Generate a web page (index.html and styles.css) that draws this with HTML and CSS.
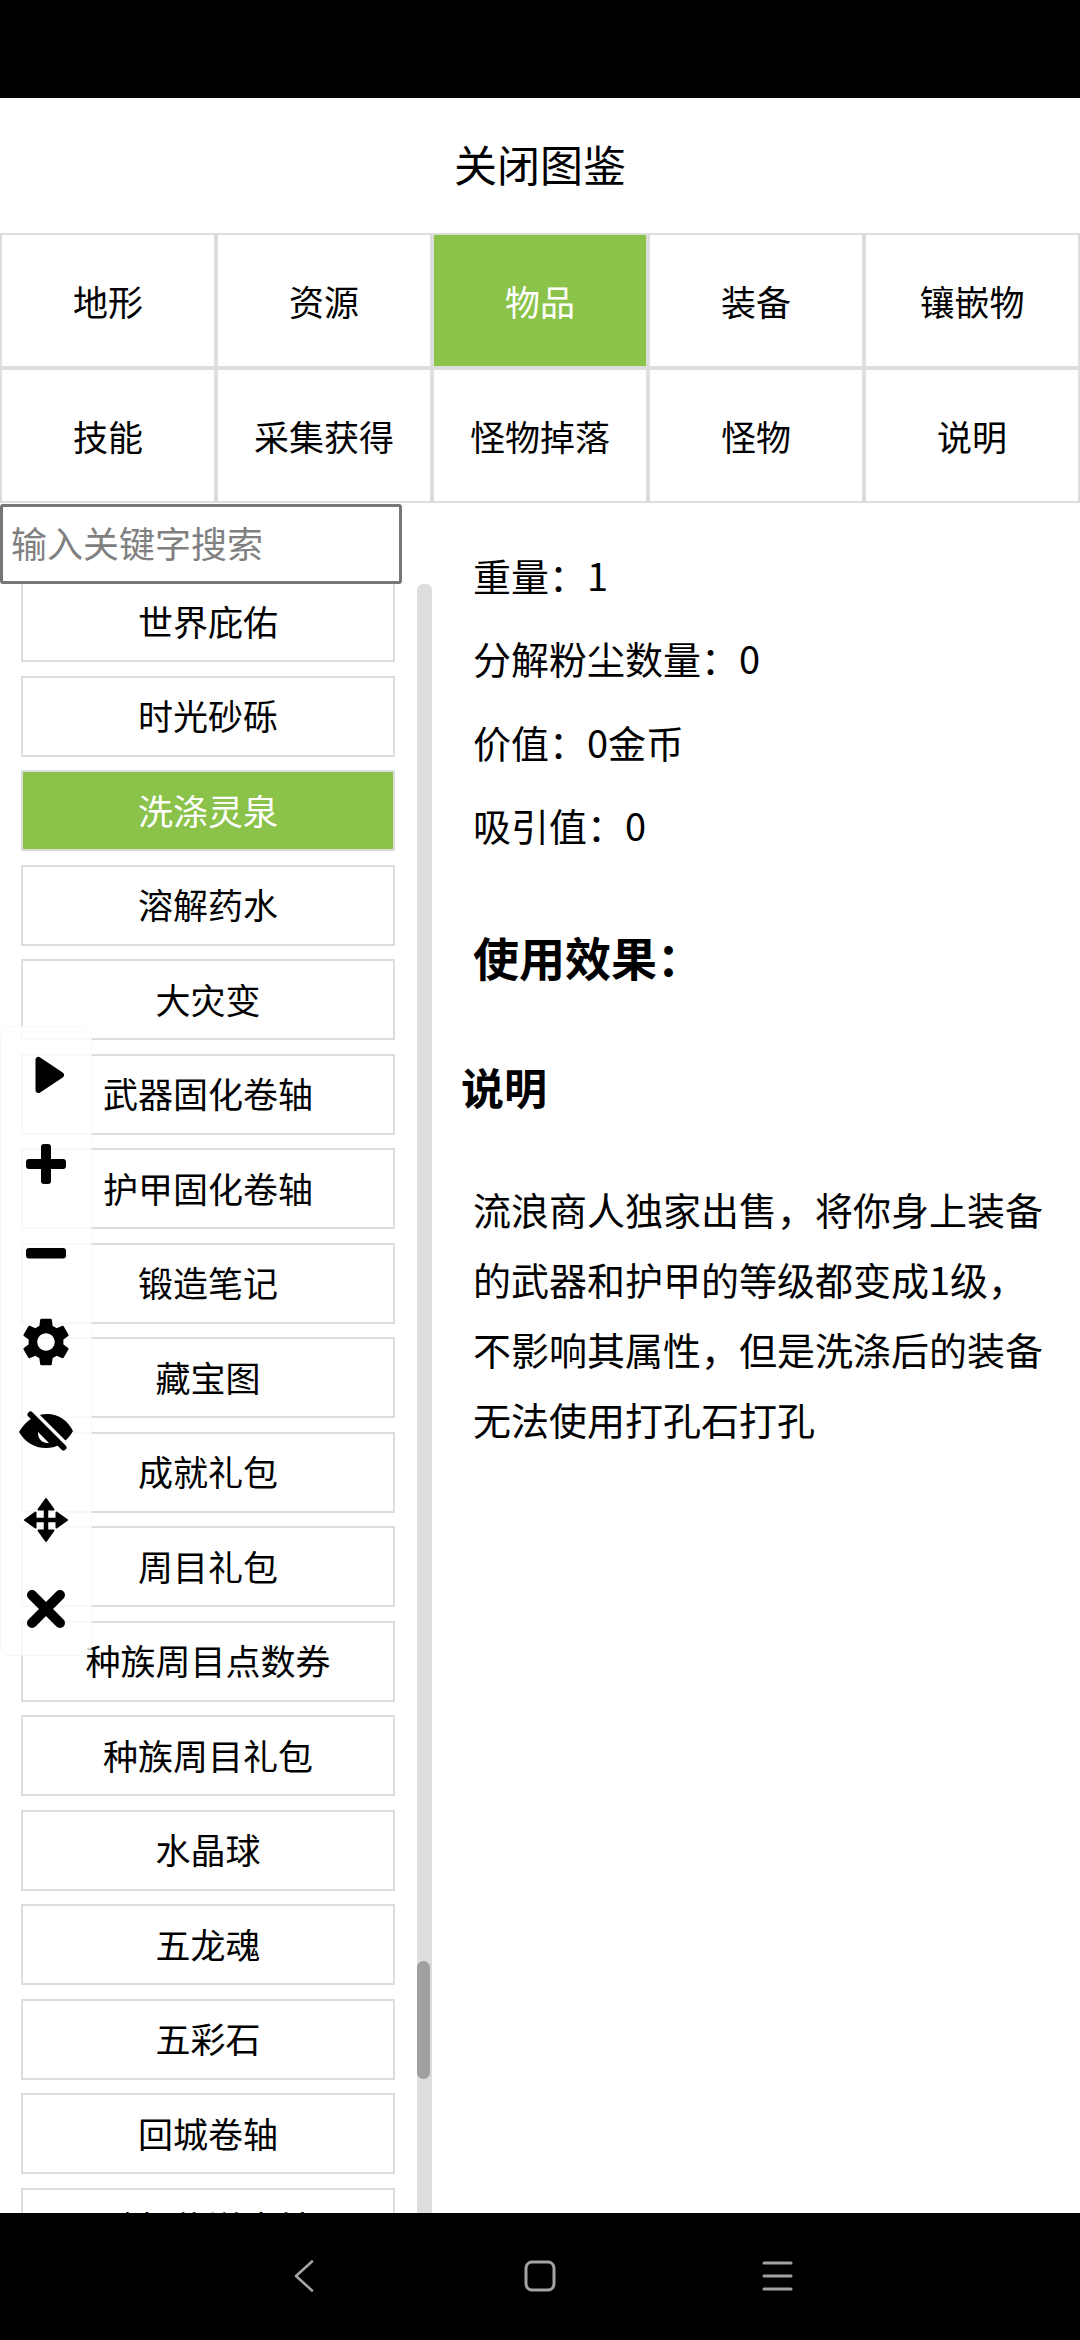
FILE: index.html
```html
<!DOCTYPE html>
<html lang="zh-CN">
<head>
    <meta charset="UTF-8">
    <meta name="viewport" content="width=device-width, initial-scale=1.0">
    <title>图鉴</title>
    <link rel="stylesheet" href="styles.css">
</head>
<body>
    <div class="status-bar"></div>

    <div class="close-title">关闭图鉴</div>

    <div class="tabs">
        <div class="tab">地形</div>
        <div class="tab">资源</div>
        <div class="tab active">物品</div>
        <div class="tab">装备</div>
        <div class="tab">镶嵌物</div>
        <div class="tab">技能</div>
        <div class="tab">采集获得</div>
        <div class="tab">怪物掉落</div>
        <div class="tab">怪物</div>
        <div class="tab">说明</div>
    </div>

    <div class="main">
        <div class="side">
            <input class="search" type="text" placeholder="输入关键字搜索">
            <div class="side-body">
                <div class="item-list">
                    <div class="item">世界庇佑</div>
                    <div class="item">时光砂砾</div>
                    <div class="item active">洗涤灵泉</div>
                    <div class="item">溶解药水</div>
                    <div class="item">大灾变</div>
                    <div class="item">武器固化卷轴</div>
                    <div class="item">护甲固化卷轴</div>
                    <div class="item">锻造笔记</div>
                    <div class="item">藏宝图</div>
                    <div class="item">成就礼包</div>
                    <div class="item">周目礼包</div>
                    <div class="item">种族周目点数券</div>
                    <div class="item">种族周目礼包</div>
                    <div class="item">水晶球</div>
                    <div class="item">五龙魂</div>
                    <div class="item">五彩石</div>
                    <div class="item">回城卷轴</div>
                    <div class="item">随机传送卷轴</div>
                </div>
                <div class="scroll-track"><div class="scroll-thumb"></div></div>
            </div>
        </div>

        <div class="detail">
            <p class="stat">重量：1</p>
            <p class="stat">分解粉尘数量：0</p>
            <p class="stat">价值：0金币</p>
            <p class="stat">吸引值：0</p>
            <h3 class="effect">使用效果：</h3>
            <h2 class="section">说明</h2>
            <p class="desc">流浪商人独家出售，将你身上装备的武器和护甲的等级都变成1级，不影响其属性，但是洗涤后的装备无法使用打孔石打孔</p>
        </div>
    </div>

    <div class="nav-bar">
        <svg class="nav-icon" viewBox="0 0 32 32"><path d="M26 1.500 10 16l16 14.500" fill="none" stroke="#a3a3a3" stroke-width="2.600" stroke-linecap="round" stroke-linejoin="round"/></svg>
        <svg class="nav-icon" viewBox="0 0 32 32"><rect x="2" y="2" width="28" height="28" rx="6" fill="none" stroke="#a3a3a3" stroke-width="3"/></svg>
        <svg class="nav-icon" viewBox="0 0 32 32"><path d="M2 3h27M2 16h27M2 29h27" fill="none" stroke="#a3a3a3" stroke-width="3" stroke-linecap="round"/></svg>
    </div>

    <!-- floating tool panel, sits over the list -->
    <div class="float-panel">
        <svg class="tool" viewBox="0 0 60 60"><path d="M22.500 15v30L45 30z" stroke="#000" stroke-width="6" stroke-linejoin="round"/></svg>
        <svg class="tool" viewBox="0 0 60 60"><rect x="10" y="25" width="40" height="10" rx="3"/><rect x="25" y="10" width="10" height="40" rx="3"/></svg>
        <svg class="tool" viewBox="0 0 60 60"><rect x="10" y="25" width="40" height="10.500" rx="3"/></svg>
        <svg class="tool" viewBox="-.4 -.4 24.800 24.800"><path d="M19.140 12.940c.04-.3.06-.61.06-.94 0-.32-.02-.64-.07-.94l2.030-1.580c.18-.14.23-.41.12-.61l-1.920-3.320c-.12-.22-.37-.29-.59-.22l-2.390.96c-.5-.38-1.030-.7-1.620-.94L14.400 2.810c-.04-.24-.24-.41-.48-.41h-3.840c-.24 0-.43.17-.47.41L9.250 5.350c-.59.24-1.130.57-1.620.94l-2.390-.96c-.22-.08-.47 0-.59.22L2.740 8.870c-.12.21-.08.47.12.61l2.030 1.580c-.05.3-.09.63-.09.94s.02.64.07.94l-2.030 1.580c-.18.14-.23.41-.12.61l1.920 3.320c.12.22.37.29.59.22l2.390-.96c.5.38 1.030.7 1.620.94l.36 2.540c.05.24.24.41.48.41h3.840c.24 0 .44-.17.47-.41l.36-2.540c.59-.24 1.130-.56 1.620-.94l2.390.96c.22.08.47 0 .59-.22l1.920-3.320c.12-.22.07-.47-.12-.61zM12 15.600c-1.980 0-3.600-1.620-3.600-3.600s1.620-3.600 3.600-3.600 3.600 1.620 3.600 3.600-1.620 3.600-3.600 3.600z"/></svg>
        <svg class="tool" viewBox="0 0 60 60">
            <path d="M3 31C10 19 20 13 31 13c12 0 21 7 26 17-6 11-16 17-27 17C18 47 9 41 3 31z"/>
            <path d="M22 31a10 10 0 0 0 11 11z" fill="#fff"/>
            <path d="M18 11 53 46" stroke="#fff" stroke-width="4" fill="none"/>
            <path d="M14.500 13.500 47.500 46.500" stroke="#000" stroke-width="6" stroke-linecap="round" fill="none"/>
        </svg>
        <svg class="tool" viewBox="0 0 60 60">
            <path d="M30 14v32M14 30h32" stroke="#000" stroke-width="4.500" fill="none"/>
            <path d="M30 9l7.500 10.500h-15zM30 51l7.500-10.500h-15zM9 30l10.500-7.500v15zM51 30l-10.500-7.500v15z" stroke="#000" stroke-width="2" stroke-linejoin="round"/>
        </svg>
        <svg class="tool" viewBox="0 0 60 60"><path d="M16 16l28 28M44 16 16 44" stroke="#000" stroke-width="10" stroke-linecap="round" fill="none"/></svg>
    </div>
</body>
</html>
```

FILE: styles.css
```css
* {
    box-sizing: border-box;
}
html, body {
    margin: 0;
    height: 2340px;
    overflow: hidden;
}
body {
    display: flex;
    flex-direction: column;
    position: relative;
    background: #fff;
    color: #000;
    font-family: "Noto Sans CJK SC", "Noto Sans", sans-serif;
}
.status-bar {
    height: 98px;
    background: #000;
    flex: none;
}
.close-title {
    height: 135px;
    flex: none;
    display: flex;
    align-items: center;
    justify-content: center;
    padding-bottom: 5px;
    font-size: 43px;
}
.tabs {
    display: grid;
    grid-template-columns: repeat(5, 216px);
    grid-auto-rows: 135px;
    flex: none;
}
.tab {
    display: flex;
    align-items: center;
    justify-content: center;
    border: 2px solid #ddd;
    font-size: 35px;
}
.tab.active {
    background: #8bc34a;
    color: #fff;
}
.main {
    flex: 1;
    min-height: 0;
    display: flex;
    overflow: hidden;
}
.side {
    width: 432px;
    flex: none;
    display: flex;
    flex-direction: column;
}
.search {
    width: 402px;
    height: 80px;
    flex: none;
    margin-top: 1px;
    position: relative;
    z-index: 1;
    padding: 0 8px 5px;
    border: 3px solid #767676;
    border-radius: 3px;
    background: #fff;
    font-family: inherit;
    font-size: 36px;
    outline: none;
}
.search::placeholder {
    color: #808080;
    opacity: 1;
}
.side-body {
    flex: 1;
    min-height: 0;
    display: flex;
}
.item-list {
    width: 417px;
    flex: none;
    margin-top: -3px;
    padding: 0 22px 0 21px;
}
.item {
    height: 81px;
    margin-bottom: 13.500px;
    padding-bottom: 3px;
    display: flex;
    align-items: center;
    justify-content: center;
    border: 2px solid #ddd;
    font-size: 35px;
}
.item.active {
    background: #8bc34a;
    color: #fff;
}
.scroll-track {
    width: 15px;
    flex: none;
    background: #ddd;
    border-radius: 6px 6px 0 0;
}
.scroll-thumb {
    width: 13px;
    height: 118px;
    margin-top: 1377px;
    background: #a0a0a0;
    border-radius: 7px;
}
.detail {
    flex: 1;
    min-width: 0;
    padding: 37px 16px 0 41px;
}
.stat {
    margin: 0 0 13.300px;
    font-size: 38px;
    line-height: 70px;
}
.effect {
    margin: 61px 0 0;
    font-size: 46px;
    line-height: 70px;
}
.section {
    margin: 60px 0 0 -12px;
    font-size: 43px;
    line-height: 70px;
}
.desc {
    margin: 53px 0 0;
    font-size: 38px;
    line-height: 70px;
}
.nav-bar {
    height: 127px;
    flex: none;
    background: #000;
    position: relative;
    z-index: 2;
    display: flex;
    align-items: center;
    justify-content: center;
    gap: 206px;
    padding-bottom: 1px;
}
.nav-icon {
    width: 32px;
    height: 32px;
}
.float-panel {
    position: absolute;
    left: 0;
    top: 1026px;
    width: 92px;
    height: 630px;
    padding-top: 18px;
    display: flex;
    flex-direction: column;
    align-items: center;
    gap: 29px;
    background: rgba(255, 255, 255, 0.8);
    border: 1px solid rgba(0, 0, 0, 0.03);
    border-radius: 10px;
}
.tool {
    width: 60px;
    height: 60px;
    flex: none;
    display: block;
}
```
